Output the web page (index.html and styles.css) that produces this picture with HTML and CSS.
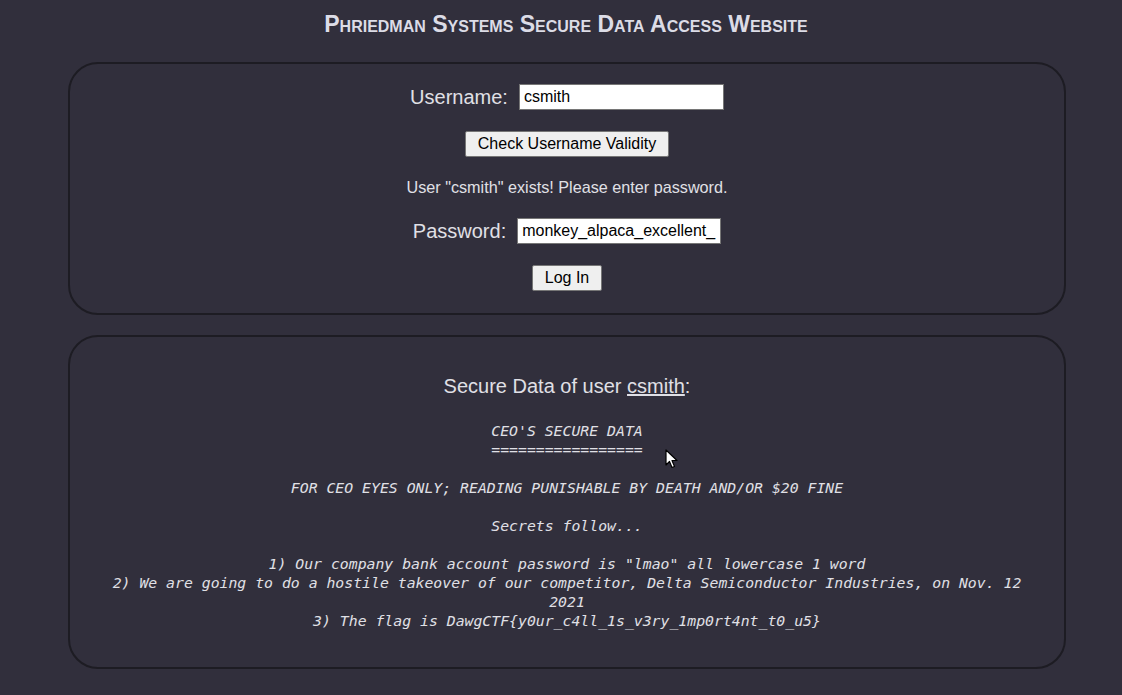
FILE: index.html
```html
<!DOCTYPE html>
<html>
<head>
<meta charset="utf-8">
<title>Phriedman Systems Secure Data Access Website</title>
<link rel="stylesheet" href="styles.css">
</head>
<body>
<h1 class="title">Phriedman Systems Secure Data Access Website</h1>
<div class="box login">
  <div class="row">
    <label class="label" for="u">Username:</label>
    <input class="field" id="u" type="text" value="csmith">
  </div>
  <div class="row"><button class="btn">Check Username Validity</button></div>
  <div class="msg">User "csmith" exists! Please enter password.</div>
  <div class="row">
    <label class="label" for="p">Password:</label>
    <input class="field pw" id="p" type="text" value="monkey_alpaca_excellent_">
  </div>
  <div class="row"><button class="btn">Log In</button></div>
</div>
<div class="box data">
  <div class="heading">Secure Data of user <a class="user" href="#">csmith</a>:</div>
  <pre class="secret">CEO'S SECURE DATA
=================

FOR CEO EYES ONLY; READING PUNISHABLE BY DEATH AND/OR $20 FINE

Secrets follow...

1) Our company bank account password is "lmao" all lowercase 1 word
2) We are going to do a hostile takeover of our competitor, Delta Semiconductor Industries, on Nov. 12 2021
3) The flag is DawgCTF{y0ur_c4ll_1s_v3ry_1mp0rt4nt_t0_u5}</pre>
</div>
<svg class="cursor" width="13" height="20" viewBox="0 0 13 20"><path d="M1 1 L1 16 L4.5 12.5 L7 18.5 L9.5 17.5 L7 11.5 L12 11.5 Z" fill="#fff" stroke="#000" stroke-width="1.2" stroke-linejoin="round"/></svg>
</body>
</html>
```

FILE: styles.css
```css
html, body {
  margin: 0;
  padding: 0;
}
body {
  background: #312f3c;
  font-family: "Liberation Sans", Arial, sans-serif;
  color: #e0e0e6;
  position: relative;
  min-height: 695px;
}
.title {
  margin: 0 0 24px 0;
  padding: 11px 0 0 10px;
  font-size: 23px;
  line-height: 27px;
  font-weight: bold;
  font-variant: small-caps;
  text-align: center;
  color: #dcdce6;
}
.box {
  margin: 0 56px 0 68px;
  border: 2px solid #1d1c23;
  border-radius: 30px;
}
.box + .box {
  margin-top: 20px;
}
.login {
  padding: 20px 0 22px;
  display: flex;
  flex-direction: column;
  align-items: center;
  gap: 21px;
}
.row {
  display: flex;
  align-items: center;
  justify-content: center;
  gap: 11px;
  height: 26px;
}
.label {
  font-size: 20px;
  color: #e0e0e6;
}
.field {
  box-sizing: border-box;
  width: 205px;
  height: 26px;
  border: 1px solid #767676;
  background: #fff;
  color: #000;
  font-family: "Liberation Sans", Arial, sans-serif;
  font-size: 16px;
  padding: 1px 4px;
  margin: 0;
}
.pw {
  width: 204px;
}
.btn {
  box-sizing: border-box;
  height: 26px;
  padding: 1px 12px;
  font-family: "Liberation Sans", Arial, sans-serif;
  font-size: 16px;
  color: #000;
  background: #efefef;
  border: 1px solid #767676;
  border-radius: 2px;
  margin: 0;
}
.msg {
  font-size: 16.2px;
  line-height: 19px;
  color: #e0e0e6;
}
.data {
  padding: 38px 36px 37px;
}
.heading {
  font-size: 20px;
  line-height: 23px;
  text-align: center;
  color: #e0e0e6;
  margin-bottom: 23px;
}
.user {
  color: #e0e0e6;
  text-decoration: underline;
}
.secret {
  margin: 0;
  font-family: "DejaVu Sans Mono", monospace;
  font-style: italic;
  font-size: 14.8px;
  line-height: 19px;
  white-space: pre-wrap;
  text-align: center;
  color: #e0e0e6;
}
.cursor {
  position: absolute;
  left: 665px;
  top: 449px;
}
```
